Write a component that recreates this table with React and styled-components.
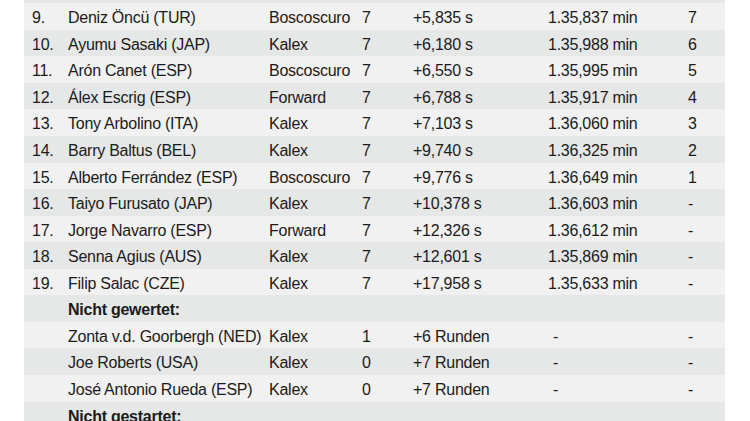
import React from 'react'
import styled, { createGlobalStyle } from 'styled-components'

const GlobalStyle = createGlobalStyle`
  body {
    margin: 0;
    background: #ffffff;
    font-family: "Liberation Sans", Arial, sans-serif;
  }
`

const results = [
  { rank: '9.', name: 'Deniz Öncü (TUR)', team: 'Boscoscuro', laps: '7', gap: '+5,835 s', time: '1.35,837 min', points: '7' },
  { rank: '10.', name: 'Ayumu Sasaki (JAP)', team: 'Kalex', laps: '7', gap: '+6,180 s', time: '1.35,988 min', points: '6' },
  { rank: '11.', name: 'Arón Canet (ESP)', team: 'Boscoscuro', laps: '7', gap: '+6,550 s', time: '1.35,995 min', points: '5' },
  { rank: '12.', name: 'Álex Escrig (ESP)', team: 'Forward', laps: '7', gap: '+6,788 s', time: '1.35,917 min', points: '4' },
  { rank: '13.', name: 'Tony Arbolino (ITA)', team: 'Kalex', laps: '7', gap: '+7,103 s', time: '1.36,060 min', points: '3' },
  { rank: '14.', name: 'Barry Baltus (BEL)', team: 'Kalex', laps: '7', gap: '+9,740 s', time: '1.36,325 min', points: '2' },
  { rank: '15.', name: 'Alberto Ferrández (ESP)', team: 'Boscoscuro', laps: '7', gap: '+9,776 s', time: '1.36,649 min', points: '1' },
  { rank: '16.', name: 'Taiyo Furusato (JAP)', team: 'Kalex', laps: '7', gap: '+10,378 s', time: '1.36,603 min', points: '-' },
  { rank: '17.', name: 'Jorge Navarro (ESP)', team: 'Forward', laps: '7', gap: '+12,326 s', time: '1.36,612 min', points: '-' },
  { rank: '18.', name: 'Senna Agius (AUS)', team: 'Kalex', laps: '7', gap: '+12,601 s', time: '1.35,869 min', points: '-' },
  { rank: '19.', name: 'Filip Salac (CZE)', team: 'Kalex', laps: '7', gap: '+17,958 s', time: '1.35,633 min', points: '-' },
  { heading: 'Nicht gewertet:' },
  { rank: '', name: 'Zonta v.d. Goorbergh (NED)', team: 'Kalex', laps: '1', gap: '+6 Runden', time: '-', points: '-' },
  { rank: '', name: 'Joe Roberts (USA)', team: 'Kalex', laps: '0', gap: '+7 Runden', time: '-', points: '-' },
  { rank: '', name: 'José Antonio Rueda (ESP)', team: 'Kalex', laps: '0', gap: '+7 Runden', time: '-', points: '-' },
  { heading: 'Nicht gestartet:' },
]

const App = () => {
  return (
    <Page>
      <GlobalStyle />
      <Table>
        <TopEdge />
        {results.map((r, i) =>
          r.heading ? (
            <Row key={i} $dark={i % 2 === 1}>
              <Cell />
              <Heading>{r.heading}</Heading>
            </Row>
          ) : (
            <Row key={i} $dark={i % 2 === 1}>
              <Cell>{r.rank}</Cell>
              <Cell>{r.name}</Cell>
              <Cell>{r.team}</Cell>
              <Cell>{r.laps}</Cell>
              <Cell>{r.gap}</Cell>
              <Cell $time={r.time === '-'}>{r.time}</Cell>
              <Cell>{r.points}</Cell>
            </Row>
          )
        )}
      </Table>
    </Page>
  )
}

const Page = styled.div`
  padding-left: 24px;
  width: 701px;
  height: 421px;
  overflow: hidden;
`

const Table = styled.div`
  display: flex;
  flex-direction: column;
  width: 701px;
`

const TopEdge = styled.div`
  height: 3.3px;
  background: #e6e7e7;
`

const Row = styled.div`
  display: grid;
  grid-template-columns: 36px 201px 93px 51px 135px 140px 1fr;
  flex: 0 0 auto;
  height: 26.55px;
  box-sizing: border-box;
  padding: 3px 0 0 8px;
  line-height: 23.5px;
  font-size: 16px;
  letter-spacing: -0.25px;
  color: #1b1b1b;
  background: ${p => (p.$dark ? '#e6e7e7' : '#f1f1f1')};
  white-space: nowrap;
`

const Cell = styled.div`
  padding-left: ${p => (p.$time ? '5px' : '0')};
`

const Heading = styled.div`
  grid-column: 2 / span 3;
  font-weight: bold;
`

export default App
